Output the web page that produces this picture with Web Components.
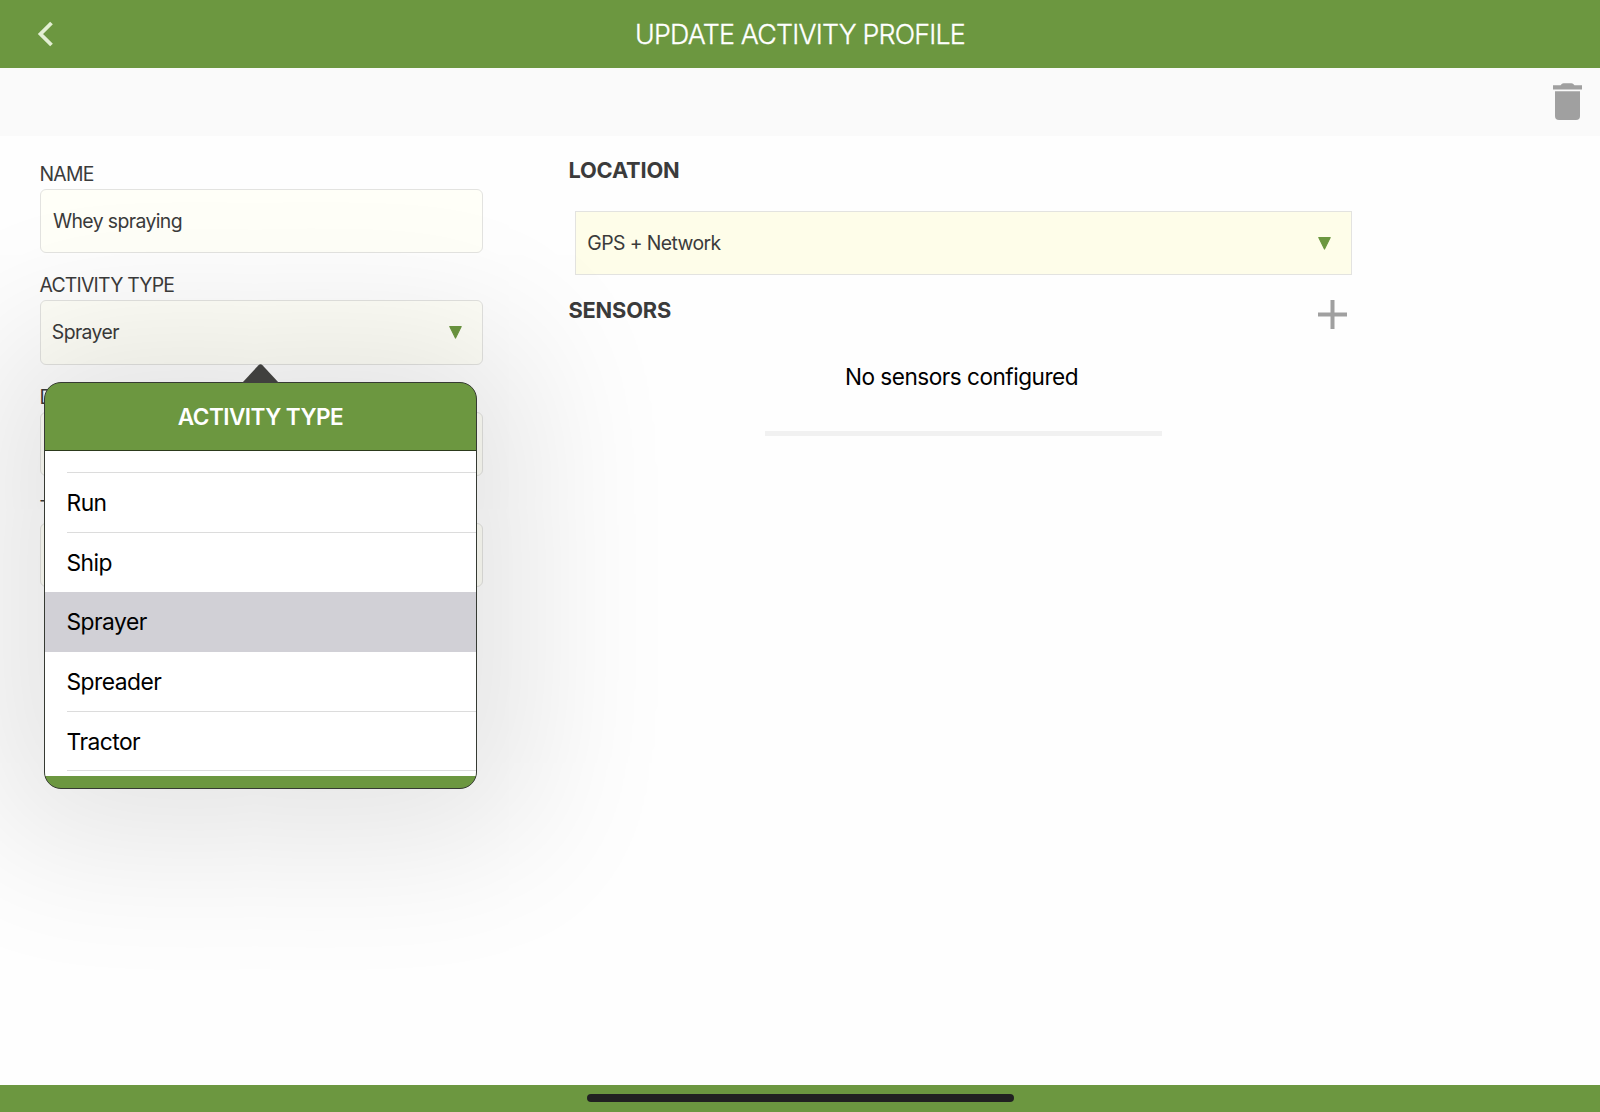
<!DOCTYPE html>
<html lang="en">
<head>
<meta charset="utf-8">
<title>Update Activity Profile</title>
<style>
    body{
        margin: 0;
        background-color: #fefefe;
        font-family: Inter, "Liberation Sans", sans-serif;
        color: #3b3b3b;
        --green: #6c9740;
        --grey: #a0a0a0;
    }
</style>
</head>
<body>
<profile-page>
    <title-bar slot="top">UPDATE ACTIVITY PROFILE</title-bar>
    <tool-bar slot="top"></tool-bar>

    <form-field slot="left" label="NAME" style="--indent: 12.5px">Whey spraying</form-field>
    <form-field slot="left" label="ACTIVITY TYPE" arrow>
        Sprayer
        <pop-over slot="menu" heading="ACTIVITY TYPE">
            <pop-option class="first"></pop-option>
            <pop-option>Run</pop-option>
            <pop-option last>Ship</pop-option>
            <pop-option selected>Sprayer</pop-option>
            <pop-option>Spreader</pop-option>
            <pop-option>Tractor</pop-option>
        </pop-over>
    </form-field>
    <form-field slot="left" label="D"></form-field>
    <form-field slot="left" label="T"></form-field>

    <form-section slot="right" heading="LOCATION">
        <form-field class="wide" square arrow>GPS + Network</form-field>
    </form-section>
    <form-section slot="right" heading="SENSORS" add>
        <empty-list>No sensors configured</empty-list>
    </form-section>
</profile-page>

<script>
class ProfilePage extends HTMLElement
{
    constructor(){
        super();

        this.attachShadow({mode: 'open'});
        this.shadowRoot.innerHTML = `
            <style>
                :host{
                    display: flex;
                    flex-direction: column;
                    height: 1112px;
                    overflow: hidden;
                }
                main{
                    flex: 1;
                    display: grid;
                    grid-template-columns: 443px 785px;
                    column-gap: 85px;
                    align-content: start;
                    padding: 24px 39.5px 0;
                }
                .left{
                    display: flex;
                    flex-direction: column;
                    gap: 18px;
                }
                footer{
                    display: flex;
                    justify-content: center;
                    align-items: center;
                    height: 27px;
                    background-color: var(--green);
                }
                .home{
                    width: 427px;
                    height: 8px;
                    margin-bottom: 1px;
                    border-radius: 4px;
                    background-color: #212121;
                }
            </style>
            <slot name="top"></slot>
            <main>
                <div class="left"><slot name="left"></slot></div>
                <div><slot name="right"></slot></div>
            </main>
            <footer><div class="home"></div></footer>
        `;
    }
}

class TitleBar extends HTMLElement
{
    constructor(){
        super();

        this.attachShadow({mode: 'open'});
        this.shadowRoot.innerHTML = `
            <style>
                :host{
                    display: grid;
                    grid-template-columns: 80px 1fr 80px;
                    align-items: center;
                    height: 68px;
                    flex: none;
                    background-color: var(--green);
                    color: #fff;
                    text-align: center;
                    font-size: 26.8px;
                    font-weight: 350;
                    letter-spacing: -0.8px;
                    -webkit-text-stroke: 0.3px #fff;
                }
                svg{
                    display: block;
                    margin-left: 36px;
                }
            </style>
            <svg width="20" height="28" viewBox="0 0 20 28">
                <path d="M15.5 3 L4.5 14 L15.5 25" fill="none" stroke="#e3efd3" stroke-width="3.8"/>
            </svg>
            <span><slot></slot></span>
        `;
    }
}

class ToolBar extends HTMLElement
{
    constructor(){
        super();

        this.attachShadow({mode: 'open'});
        this.shadowRoot.innerHTML = `
            <style>
                :host{
                    display: flex;
                    justify-content: flex-end;
                    align-items: flex-start;
                    height: 68px;
                    flex: none;
                    box-sizing: border-box;
                    padding: 15px 18px 0 0;
                    background-color: #fafafa;
                }
                svg{
                    fill: var(--grey);
                }
            </style>
            <svg width="29" height="37" viewBox="0 0 29 37">
                <path d="M0 2.3 H7.5 L9 0.8 Q9.5 0.3 10.5 0.3 H18.5 Q19.5 0.3 20 0.8 L21.5 2.3 H29 V6.5 H0 Z"/>
                <path d="M2 8.3 H27 V33 Q27 37 23 37 H6 Q2 37 2 33 Z"/>
            </svg>
        `;
    }
}

class FormField extends HTMLElement
{
    constructor(){
        super();

        this.attachShadow({mode: 'open'});

        //the label and the arrow are both optional
        const label = this.hasAttribute('label') ? `<label>${this.getAttribute('label')}</label>` : '';
        const arrow = this.hasAttribute('arrow') ? `
            <svg width="13" height="14" viewBox="0 0 13 14">
                <path d="M0.8 1.6 H12.2 L6.5 13 Z" fill="var(--green)" stroke="var(--green)" stroke-width="1.2" stroke-linejoin="round"/>
            </svg>` : '';

        this.shadowRoot.innerHTML = `
            <style>
                :host{
                    display: block;
                    position: relative;
                    font-size: 19.4px;
                    letter-spacing: -0.6px;
                }
                label{
                    display: block;
                    height: 28px;
                    margin-bottom: 1px;
                    line-height: 28px;
                    letter-spacing: -0.78px;
                }
                .box{
                    display: flex;
                    justify-content: space-between;
                    align-items: center;
                    box-sizing: border-box;
                    height: 64.3px;
                    padding: 0 20px 0 var(--indent, 11.3px);
                    border: 1.5px solid #e3e3e0;
                    border-radius: 6px;
                    background-color: #fffff8;
                }
                :host([square]) .box{
                    border-radius: 0;
                    background-color: #fefde9;
                }
            </style>
            ${label}
            <div class="box"><span><slot></slot></span>${arrow}</div>
            <slot name="menu"></slot>
        `;
    }
}

class PopOver extends HTMLElement
{
    constructor(){
        super();

        this.attachShadow({mode: 'open'});
        this.shadowRoot.innerHTML = `
            <style>
                :host{
                    display: block;
                    position: absolute;
                    z-index: 1;
                    top: 110.7px;
                    left: 4.5px;
                    width: 433px;
                    color: #000;
                }
                .panel{
                    box-sizing: border-box;
                    height: 407px;
                    display: flex;
                    flex-direction: column;
                    overflow: hidden;
                    border: 1px solid #363a33;
                    border-radius: 17px;
                    background-color: var(--green);
                }
                .shade{
                    border-radius: 17px;
                    box-shadow: 0 0 150px 52px rgba(0,0,10,0.105);
                }
                .tip{
                    position: absolute;
                    left: 198px;
                    top: -18px;
                }
                header{
                    height: 67px;
                    flex: none;
                    border-bottom: 1.5px solid #2c3a1c;
                    color: #fff;
                    text-align: center;
                    font-size: 22.6px;
                    font-weight: 600;
                    line-height: 67px;
                    letter-spacing: -0.56px;
                }
                .list{
                    flex: 1;
                    overflow: hidden;
                    background-color: #fff;
                }
                .foot{
                    height: 12px;
                    flex: none;
                }
            </style>
            <div class="shade">
                <div class="panel">
                    <header>${this.getAttribute('heading')}</header>
                    <div class="list"><slot></slot></div>
                    <div class="foot"></div>
                </div>
            </div>
            <svg class="tip" width="37" height="19" viewBox="0 0 37 19">
                <path d="M0 19 L16.5 1.2 Q18.5 -0.6 20.5 1.2 L37 19 Z" fill="#40403e"/>
            </svg>
        `;
    }
}

class PopOption extends HTMLElement
{
    constructor(){
        super();

        this.attachShadow({mode: 'open'});
        this.shadowRoot.innerHTML = `
            <style>
                :host{
                    display: block;
                    height: 59.6px;
                    padding-left: 21.5px;
                    font-size: 22.8px;
                    line-height: 59px;
                    letter-spacing: -0.52px;
                }
                :host(.first){
                    height: 22.2px;
                }
                div{
                    box-sizing: border-box;
                    height: 100%;
                    border-bottom: 1px solid #dcdcdc;
                }
                :host([selected]){
                    background-color: #d1d0d6;
                }
                :host([selected]) div, :host([last]) div{
                    border-bottom-color: transparent;
                }
            </style>
            <div><slot></slot></div>
        `;
    }
}

class FormSection extends HTMLElement
{
    constructor(){
        super();

        this.attachShadow({mode: 'open'});

        const add = this.hasAttribute('add') ? `
            <svg width="29" height="29" viewBox="0 0 29 29">
                <path d="M14.5 0 V29 M0 14.5 H29" stroke="var(--grey)" stroke-width="4"/>
            </svg>` : '';

        this.shadowRoot.innerHTML = `
            <style>
                :host{
                    display: block;
                }
                header{
                    display: flex;
                    justify-content: space-between;
                    align-items: flex-start;
                    height: 50.5px;
                    padding-right: 5.5px;
                }
                h2{
                    margin: -4px 0 0 0.9px;
                    font-size: 21.8px;
                    font-weight: 700;
                    line-height: 28px;
                    letter-spacing: -0.16px;
                }
                :host([add]) header{
                    margin-top: 25px;
                }
                ::slotted(.wide){
                    margin-left: 7.5px;
                    width: 777px;
                }
            </style>
            <header><h2>${this.getAttribute('heading')}</h2>${add}</header>
            <slot></slot>
        `;
    }
}

class EmptyList extends HTMLElement
{
    constructor(){
        super();

        this.attachShadow({mode: 'open'});
        this.shadowRoot.innerHTML = `
            <style>
                :host{
                    display: flex;
                    flex-direction: column;
                    align-items: center;
                    gap: 40.2px;
                    padding-top: 13px;
                    color: #000;
                    font-size: 22.6px;
                    line-height: 28px;
                    letter-spacing: -0.5px;
                }
                span{
                    margin-left: 3px;
                }
                .bar{
                    width: 397px;
                    height: 5px;
                    margin-left: 6.5px;
                    background-color: #f1f1f1;
                }
            </style>
            <span><slot></slot></span>
            <div class="bar"></div>
        `;
    }
}

customElements.define('profile-page',ProfilePage);
customElements.define('title-bar',TitleBar);
customElements.define('tool-bar',ToolBar);
customElements.define('form-field',FormField);
customElements.define('pop-over',PopOver);
customElements.define('pop-option',PopOption);
customElements.define('form-section',FormSection);
customElements.define('empty-list',EmptyList);
</script>
</body>
</html>
